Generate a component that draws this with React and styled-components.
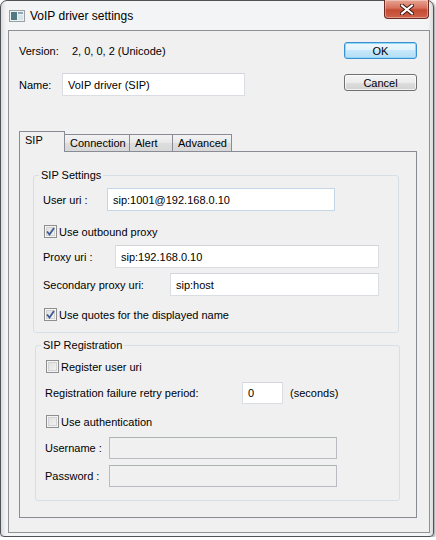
import styled, { createGlobalStyle } from "styled-components";

const GlobalStyle = createGlobalStyle`
  html, body {
    margin: 0;
    padding: 0;
    background: #ffffff;
  }
  body {
    font-family: "Liberation Sans", Arial, sans-serif;
    font-size: 11px;
    color: #000;
  }
`;

const Window = styled.div`
  width: 434px;
  height: 537px;
  box-sizing: border-box;
  border: 1px solid #4f5358;
  border-radius: 7px 7px 4px 4px;
  background: linear-gradient(to right, #d9dbde 0, #f3f4f5 5px, #f3f4f5 calc(100% - 5px), #d9dbde 100%);
  box-shadow: 1px 1px 3px rgba(0, 0, 0, 0.45);
  display: flex;
  flex-direction: column;
`;

const TitleBar = styled.div`
  height: 29px;
  display: flex;
  align-items: center;
  padding-left: 8px;
  padding-right: 4px;
`;

const TitleText = styled.span`
  font-size: 12px;
  margin-left: 5px;
  margin-top: 1px;
  color: #000;
`;

const CloseButton = styled.div`
  margin-left: auto;
  align-self: flex-start;
  margin-top: -1px;
  width: 45px;
  height: 19px;
  box-sizing: border-box;
  border: 1px solid #6d2a22;
  border-top: none;
  border-radius: 0 0 4px 4px;
  background: linear-gradient(#e8a493 0%, #d7705c 45%, #c44a33 55%, #d0624a 100%);
  display: flex;
  align-items: center;
  justify-content: center;
  box-shadow: inset 0 0 0 1px rgba(255, 255, 255, 0.35);
`;

const Client = styled.div`
  margin-left: 7px;
  width: 422px;
  height: 503px;
  box-sizing: border-box;
  border: 1px solid #8e9196;
  background: #f0f0f0;
  padding: 11px 12px 0 10px;
  display: flex;
  flex-direction: column;
`;

const TopGrid = styled.div`
  display: grid;
  grid-template-columns: 1fr 73px;
  grid-template-rows: 17px 23px;
  row-gap: 14px;
`;

const FieldRow = styled.div`
  display: flex;
  align-items: center;
  margin-top: ${(p) => p.$mt || 0}px;
  padding-left: ${(p) => p.$pl || 0}px;
  height: ${(p) => p.$h || 23}px;
`;

const Label = styled.span`
  width: ${(p) => p.$w}px;
  flex-shrink: 0;
  white-space: nowrap;
`;

const TextBox = styled.div`
  width: ${(p) => p.$w}px;
  height: ${(p) => p.$h || 23}px;
  box-sizing: border-box;
  border: 1px solid ${(p) => (p.$disabled ? "#b8bcc0" : "#dadde2")};
  border-top-color: ${(p) => (p.$disabled ? "#adb2b5" : "#d2d5da")};
  ${(p) => p.$focus && "border-color: #c4d6e8;"}
  background: ${(p) => (p.$disabled ? "#f0f0f0" : "#ffffff")};
  display: flex;
  align-items: center;
  padding-left: 5px;
  white-space: nowrap;
  color: #000;
`;

const Button = styled.div`
  height: 17px;
  box-sizing: border-box;
  border: 1px solid ${(p) => (p.$default ? "#3c8fd0" : "#707070")};
  border-radius: 3px;
  background: ${(p) =>
    p.$default
      ? "linear-gradient(#eef8fd 0%, #dff2fc 50%, #c7e8fa 50%, #b4ddf4 100%)"
      : "linear-gradient(#f4f4f4 0%, #ececec 50%, #dedede 50%, #d2d2d2 100%)"};
  box-shadow: ${(p) =>
    p.$default ? "inset 0 0 0 1px #8fd8f8" : "inset 0 0 0 1px rgba(255,255,255,0.7)"};
  display: flex;
  align-items: center;
  justify-content: center;
  margin-top: ${(p) => p.$mt || 0}px;
`;

const TabStrip = styled.div`
  margin-top: 35px;
  height: 21px;
  display: flex;
  align-items: flex-end;
  margin-bottom: -1px;
`;

const Tab = styled.div`
  position: relative;
  z-index: ${(p) => (p.$active ? 1 : 0)};
  width: ${(p) => p.$w}px;
  height: ${(p) => (p.$active ? 21 : 17)}px;
  margin-bottom: ${(p) => (p.$active ? 0 : 1)}px;
  margin-left: ${(p) => (p.$first ? 0 : -1)}px;
  box-sizing: border-box;
  border: 1px solid #898c95;
  border-bottom: none;
  padding: 2px 0 0 5px;
  background: ${(p) =>
    p.$active ? "#f0f0f0" : "linear-gradient(#f3f3f3, #e8e8e8 50%, #dddddd 50%, #d8d8d8)"};
  white-space: nowrap;
`;

const Panel = styled.div`
  height: 367px;
  box-sizing: border-box;
  border: 1px solid #898c95;
  background: #f0f0f0;
  padding: 17px 16px 0 13px;
  display: flex;
  flex-direction: column;
`;

const Group = styled.fieldset`
  margin: ${(p) => p.$mt || 0}px 0 0 ${(p) => p.$ml || 0}px;
  width: ${(p) => p.$w}px;
  box-sizing: border-box;
  border: 1px solid #d5dfe5;
  border-radius: 3px;
  padding: ${(p) => p.$pt}px 0 ${(p) => p.$pb}px 0;
  min-width: 0;
  display: flex;
  flex-direction: column;
`;

const Legend = styled.legend`
  margin-left: 5px;
  padding: 0 2px;
  line-height: 13px;
`;

const CheckRow = styled.label`
  display: flex;
  align-items: center;
  height: 13px;
  margin-top: ${(p) => p.$mt || 0}px;
  padding-left: 10px;
  white-space: nowrap;
`;

const CheckBox = styled.span`
  width: 13px;
  height: 13px;
  box-sizing: border-box;
  border: 1px solid #8f8f8f;
  background: linear-gradient(135deg, #dcdcdc, #f6f6f6);
  box-shadow: inset 0 0 0 1px #f4f4f4, inset 0 0 0 2px #d3d3d3;
  display: flex;
  align-items: center;
  justify-content: center;
  margin-right: 2px;
  flex-shrink: 0;
`;

const Suffix = styled.span`
  margin-left: 7px;
`;

const WindowIcon = () => (
  <svg width="16" height="12" viewBox="0 0 16 12">
    <rect x="0.5" y="0.5" width="15" height="11" fill="#eef1f2" stroke="#9aa0a4" />
    <rect x="2" y="2" width="6" height="8" fill="#4f7a84" />
    <rect x="9" y="2" width="5" height="2" fill="#8fa9b4" />
    <rect x="9" y="5" width="5" height="5" fill="#d8e3e8" />
  </svg>
);

const CloseGlyph = () => (
  <svg width="14" height="11" viewBox="0 0 14 11">
    <path d="M2 1.5 L12 9.5 M12 1.5 L2 9.5" stroke="#3b1812" strokeWidth="4" strokeLinecap="square" />
    <path d="M2 1.5 L12 9.5 M12 1.5 L2 9.5" stroke="#ffffff" strokeWidth="2" strokeLinecap="square" />
  </svg>
);

const Check = ({ checked, mt, children }) => (
  <CheckRow $mt={mt}>
    <CheckBox>
      {checked && (
        <svg width="9" height="9" viewBox="0 0 9 9">
          <path d="M1 4.5 L3.5 7.5 L8 1" fill="none" stroke="#3d5a98" strokeWidth="1.8" />
        </svg>
      )}
    </CheckBox>
    {children}
  </CheckRow>
);

const tabs = [
  { label: "SIP", width: 46, active: true },
  { label: "Connection", width: 66 },
  { label: "Alert", width: 44 },
  { label: "Advanced", width: 60 },
];

export default function App() {
  return (
    <>
      <GlobalStyle />
      <Window>
        <TitleBar>
          <WindowIcon />
          <TitleText>VoIP driver settings</TitleText>
          <CloseButton>
            <CloseGlyph />
          </CloseButton>
        </TitleBar>
        <Client>
          <TopGrid>
            <FieldRow $h={17}>
              <Label $w={53}>Version:</Label>
              <span>2, 0, 0, 2 (Unicode)</span>
            </FieldRow>
            <Button $default>OK</Button>
            <FieldRow>
              <Label $w={43}>Name:</Label>
              <TextBox $w={183}>VoIP driver (SIP)</TextBox>
            </FieldRow>
            <Button $mt={1}>Cancel</Button>
          </TopGrid>

          <TabStrip>
            {tabs.map((t, i) => (
              <Tab key={t.label} $w={t.width} $active={t.active} $first={i === 0}>
                {t.label}
              </Tab>
            ))}
          </TabStrip>

          <Panel>
            <Group $w={366} $pt={6} $pb={11}>
              <Legend>SIP Settings</Legend>
              <FieldRow $pl={9}>
                <Label $w={64}>User uri :</Label>
                <TextBox $w={228} $focus>sip:1001@192.168.0.10</TextBox>
              </FieldRow>
              <Check checked mt={14}>Use outbound proxy</Check>
              <FieldRow $pl={9} $mt={7}>
                <Label $w={72}>Proxy uri :</Label>
                <TextBox $w={264}>sip:192.168.0.10</TextBox>
              </FieldRow>
              <FieldRow $pl={9} $mt={5}>
                <Label $w={127}>Secondary proxy uri:</Label>
                <TextBox $w={209}>sip:host</TextBox>
              </FieldRow>
              <Check checked mt={12}>Use quotes for the displayed name</Check>
            </Group>

            <Group $w={365} $ml={2} $mt={6} $pt={8} $pb={13}>
              <Legend>SIP Registration</Legend>
              <Check>Register user uri</Check>
              <FieldRow $pl={9} $mt={9} $h={22}>
                <Label $w={197}>Registration failure retry period:</Label>
                <TextBox $w={41} $h={22}>0</TextBox>
                <Suffix>(seconds)</Suffix>
              </FieldRow>
              <Check mt={11}>Use authentication</Check>
              <FieldRow $pl={9} $mt={9} $h={22}>
                <Label $w={64}>Username :</Label>
                <TextBox $w={228} $h={22} $disabled />
              </FieldRow>
              <FieldRow $pl={9} $mt={6} $h={22}>
                <Label $w={64}>Password :</Label>
                <TextBox $w={228} $h={22} $disabled />
              </FieldRow>
            </Group>
          </Panel>
        </Client>
      </Window>
    </>
  );
}
